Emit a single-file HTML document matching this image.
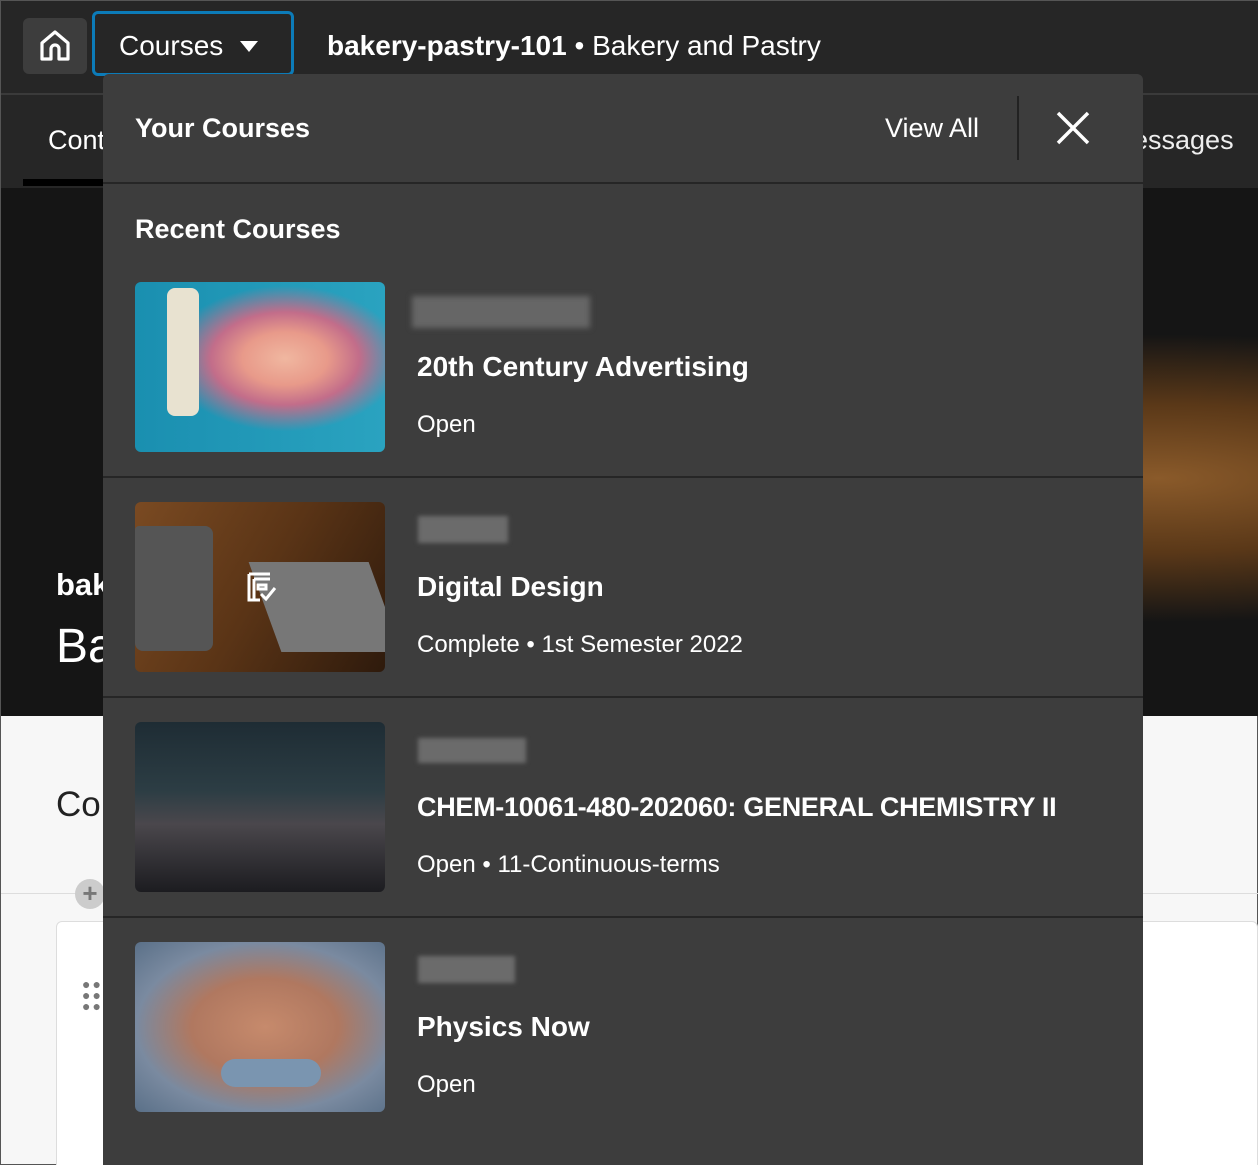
<!DOCTYPE html>
<html style="overflow:hidden"><head><style>
*{margin:0;padding:0;box-sizing:border-box}
body{width:1258px;height:1165px;overflow:hidden;position:relative;background:#f7f7f7;font-family:"Liberation Sans",sans-serif;border:1px solid #555}
.abs{position:absolute}
.w{color:#fff}
</style></head><body>
<div class="abs" style="left:0;top:0;width:1258px;height:92px;background:#262626"></div>
<div class="abs" style="left:0;top:92px;width:1258px;height:96px;background:#262626;border-top:2px solid #3a3a3a"></div>
<div class="abs" style="left:22px;top:178px;width:80px;height:7px;background:#000"></div>
<div class="abs w" style="left:47px;top:124px;font-size:27px">Cont</div>
<div class="abs" style="left:1142px;top:124px;font-size:27px;color:#eee;width:116px;overflow:hidden;white-space:nowrap"><span style="margin-left:-10px">essages</span></div>
<div class="abs" style="left:0;top:187px;width:1258px;height:528px;background:radial-gradient(ellipse at 92% 55%,#8a5a2a 0,#5a3818 18%,#151515 35%),linear-gradient(160deg,#333,#111 60%,#000)"></div>
<div class="abs w" style="left:55px;top:566px;font-size:31px;font-weight:bold">bak</div>
<div class="abs w" style="left:55px;top:618px;font-size:48px">Ba</div>
<div class="abs" style="left:55px;top:784px;font-size:35px;color:#222">Co</div>
<div class="abs" style="left:0;top:892px;width:1258px;height:1px;background:#ddd"></div>
<div class="abs" style="left:55px;top:920px;width:1202px;height:260px;background:#fff;border:1px solid #ddd;border-radius:6px"></div>
<div class="abs" style="left:74px;top:878px;width:30px;height:30px;border-radius:50%;background:#ccc;color:#777;font-size:26px;text-align:center;line-height:28px;font-weight:bold">+</div>
<div class="abs" style="left:81px;top:978px;color:#777;font-size:14px;line-height:11px;letter-spacing:2px">●●<br>●●<br>●●</div>
<div class="abs" style="left:22px;top:17px;width:64px;height:56px;background:#3d3d3d;border-radius:6px"></div>
<svg class="abs" style="left:38px;top:28px" width="32" height="34" viewBox="0 0 32 34"><path d="M3 14 L16 3 L29 14 V30 H20 V20 a4 4 0 0 0 -8 0 V30 H3 Z" fill="none" stroke="#fff" stroke-width="3.2" stroke-linejoin="round"/></svg>
<div class="abs" style="left:91px;top:10px;width:202px;height:65px;border:3px solid #0c7bb8;border-radius:6px;background:#262626"></div>
<div class="abs w" style="left:118px;top:29px;font-size:28px">Courses</div>
<svg class="abs" style="left:239px;top:40px" width="18" height="12"><path d="M0 0 H18 L9 11Z" fill="#fff"/></svg>
<div class="abs w" style="left:326px;top:29px;font-size:28px"><b>bakery-pastry-101</b> • Bakery and Pastry</div>
<div class="abs" style="left:102px;top:73px;width:1040px;height:1092px;background:#3d3d3d;border-radius:6px 6px 0 0"></div>
<div class="abs w" style="left:134px;top:112px;font-size:27px;font-weight:bold">Your Courses</div>
<div class="abs w" style="left:884px;top:112px;font-size:27px">View All</div>
<div class="abs" style="left:1016px;top:95px;width:2px;height:64px;background:#222"></div>
<svg class="abs" style="left:1055px;top:110px" width="34" height="34"><path d="M2 2L32 32M32 2L2 32" stroke="#fff" stroke-width="3.5"/></svg>
<div class="abs" style="left:102px;top:181px;width:1040px;height:2px;background:#262626"></div>
<div class="abs w" style="left:134px;top:213px;font-size:27px;font-weight:bold">Recent Courses</div>

<div class="abs" style="left:134px;top:281px;width:250px;height:170px;border-radius:6px;background:radial-gradient(ellipse at 60% 45%,#f0b7a0 0,#e89a8a 20%,#c26d8a 35%,transparent 55%),linear-gradient(90deg,#1a8fb0,#2aa3c0)"></div>
<div class="abs" style="left:166px;top:287px;width:32px;height:128px;border-radius:8px;background:#e8e2d0"></div>
<div class="abs" style="left:411px;top:295px;width:178px;height:32px;background:#666;filter:blur(3px)"></div>
<div class="abs w" style="left:416px;top:350px;font-size:28px;font-weight:bold">20th Century Advertising</div>
<div class="abs w" style="left:416px;top:410px;font-size:24px">Open</div>
<div class="abs" style="left:102px;top:475px;width:1040px;height:2px;background:#262626"></div>

<div class="abs" style="left:134px;top:501px;width:250px;height:170px;border-radius:6px;overflow:hidden;background:linear-gradient(120deg,#7a4a22,#5a3416 50%,#2e1a0c)"><div style="position:absolute;left:0;top:24px;width:78px;height:125px;border-radius:4px 8px 8px 8px;background:#555"></div><div style="position:absolute;left:130px;top:60px;width:120px;height:90px;background:#777;transform:skewX(20deg)"></div></div>
<svg class="abs" style="left:245px;top:570px" width="32" height="32"><path d="M3 3H24M3 3V29H14M8 8H24M8 8V29M12 14H20V18H12Z" fill="none" stroke="#fff" stroke-width="3"/><path d="M15 23L20 28L29 17" fill="none" stroke="#fff" stroke-width="3"/></svg>
<div class="abs" style="left:417px;top:515px;width:90px;height:27px;background:#6b6b6b;filter:blur(2px)"></div>
<div class="abs w" style="left:416px;top:570px;font-size:28px;font-weight:bold">Digital Design</div>
<div class="abs w" style="left:416px;top:630px;font-size:24px">Complete • 1st Semester 2022</div>
<div class="abs" style="left:102px;top:695px;width:1040px;height:2px;background:#262626"></div>

<div class="abs" style="left:134px;top:721px;width:250px;height:170px;border-radius:6px;background:linear-gradient(180deg,#1e2c34 0,#2c3d44 40%,#4a474c 60%,#1c1c20 100%)"></div>
<div class="abs" style="left:417px;top:737px;width:108px;height:25px;background:#6b6b6b;filter:blur(2px)"></div>
<div class="abs w" style="left:416px;top:791px;font-size:27px;font-weight:bold;letter-spacing:-0.3px">CHEM-10061-480-202060: GENERAL CHEMISTRY II</div>
<div class="abs w" style="left:416px;top:850px;font-size:24px">Open • 11-Continuous-terms</div>
<div class="abs" style="left:102px;top:915px;width:1040px;height:2px;background:#262626"></div>

<div class="abs" style="left:134px;top:941px;width:250px;height:170px;border-radius:6px;background:radial-gradient(ellipse at 52% 50%,#c68a6c 0,#b07860 40%,#7a8aa0 70%,#5a7088)"></div>
<div class="abs" style="left:220px;top:1058px;width:100px;height:28px;border-radius:14px;background:#7a95b0"></div>
<div class="abs" style="left:417px;top:955px;width:97px;height:27px;background:#6b6b6b;filter:blur(2px)"></div>
<div class="abs w" style="left:416px;top:1010px;font-size:28px;font-weight:bold">Physics Now</div>
<div class="abs w" style="left:416px;top:1070px;font-size:24px">Open</div>
</body></html>
